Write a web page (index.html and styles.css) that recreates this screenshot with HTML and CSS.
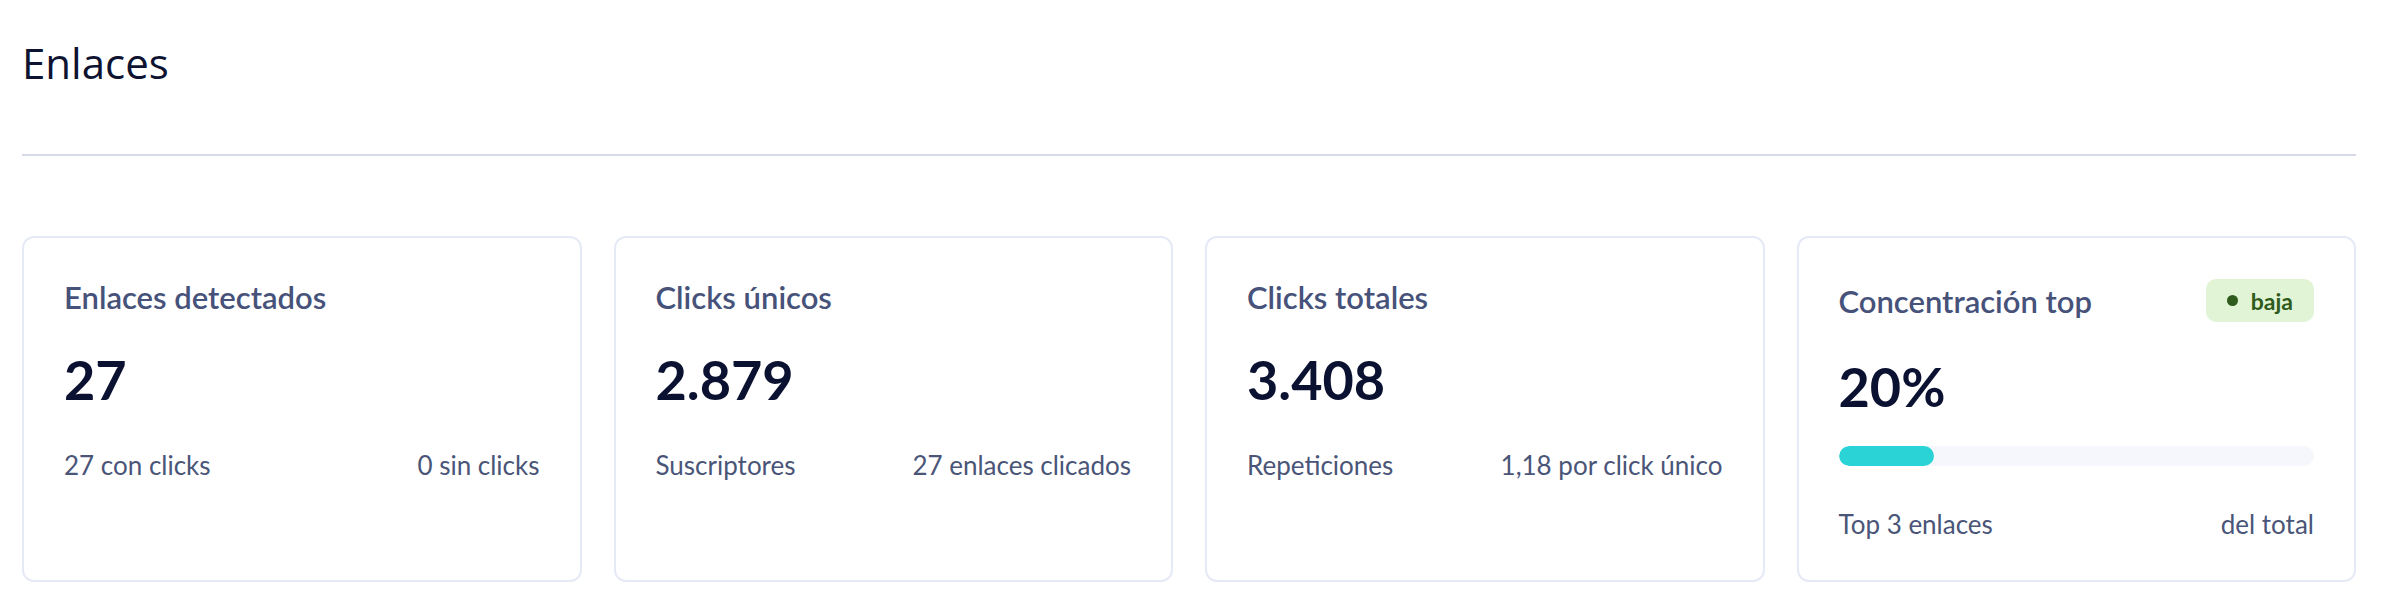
FILE: index.html
```html
<!DOCTYPE html>
<html>
<head>
    <link rel="stylesheet" href="styles.css">
</head>
<body>
    <div class="page">
        <h1 class="page-title">Enlaces</h1>
        <hr class="divider">

        <div class="stats">
            <div class="card">
                <div class="card-head">
                    <span class="card-title">Enlaces detectados</span>
                </div>
                <div class="card-value">27</div>
                <div class="card-foot">
                    <span>27 con clicks</span>
                    <span>0 sin clicks</span>
                </div>
            </div>

            <div class="card">
                <div class="card-head">
                    <span class="card-title">Clicks únicos</span>
                </div>
                <div class="card-value">2.879</div>
                <div class="card-foot">
                    <span>Suscriptores</span>
                    <span>27 enlaces clicados</span>
                </div>
            </div>

            <div class="card">
                <div class="card-head">
                    <span class="card-title">Clicks totales</span>
                </div>
                <div class="card-value">3.408</div>
                <div class="card-foot">
                    <span>Repeticiones</span>
                    <span>1,18 por click único</span>
                </div>
            </div>

            <div class="card">
                <div class="card-head">
                    <span class="card-title">Concentración top</span>
                    <span class="badge"><span class="badge-dot"></span>baja</span>
                </div>
                <div class="card-value">20%</div>
                <div class="progress">
                    <div class="progress-fill" style="width: 20%;"></div>
                </div>
                <div class="card-foot card-foot-bar">
                    <span>Top 3 enlaces</span>
                    <span>del total</span>
                </div>
            </div>
        </div>
    </div>
</body>
</html>
```

FILE: styles.css
```css
body {
    margin: 0;
    background: #fff;
    font-family: Lato, "Noto Sans", sans-serif;
}
.page {
    padding: 0 44px 0 22px;
}
.page-title {
    margin: 38px 0 0;
    font-family: "Open Sans", sans-serif;
    font-size: 42px;
    font-weight: 400;
    line-height: 1.2;
    color: #0d1330;
}
.divider {
    margin: 66px 0 0;
    border: none;
    height: 2px;
    background: #d6dae8;
}
.stats {
    display: grid;
    grid-template-columns: repeat(4, 1fr);
    gap: 32px;
    margin-top: 80px;
}
.card {
    border: 2px solid #e6e9f6;
    border-radius: 12px;
    padding: 41px 40px 40px;
    background: #fff;
}
.card-head {
    display: flex;
    justify-content: space-between;
    align-items: center;
}
.card-title {
    font-size: 31px;
    font-weight: 600;
    line-height: 36px;
    color: #46527a;
}
.badge {
    display: flex;
    align-items: center;
    gap: 13px;
    height: 43px;
    padding: 0 21px 0 21px;
    border-radius: 10px;
    background: #e1f5d6;
    color: #2f5b1c;
    font-size: 23px;
    font-weight: 700;
    box-sizing: border-box;
}
.badge-dot {
    width: 11px;
    height: 11px;
    border-radius: 50%;
    background: #2f5b1c;
}
.card-value {
    margin-top: 34px;
    font-size: 54px;
    font-weight: 700;
    line-height: 62px;
    color: #0b1130;
}
.card-foot {
    display: flex;
    justify-content: space-between;
    margin-top: 38px;
    font-size: 26px;
    line-height: 32px;
    color: #4a5578;
}
.progress {
    margin-top: 28px;
    height: 20px;
    border-radius: 10px;
    background: #f5f7fc;
    overflow: hidden;
}
.progress-fill {
    height: 100%;
    border-radius: 10px;
    background: #2ad4d6;
}
.card-foot-bar {
    margin-top: 42px;
}
```
